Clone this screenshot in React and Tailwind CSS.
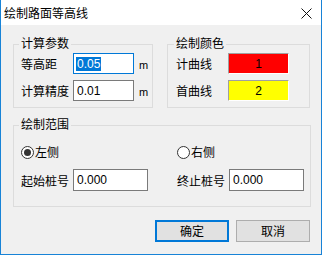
export default function App() {
  const font = "font-['Liberation_Sans','Noto_Sans_CJK_SC',sans-serif]";
  return (
    <div className={`w-[322px] h-[255px] bg-[#f0f0f0] border-x border-b border-[#1883d7] flex flex-col text-[12px] text-black ${font}`}>
      <div className="h-[25px] bg-white flex items-center justify-between pl-[3px] pr-[9px] shrink-0">
        <span className="text-[12px] leading-[16px] pt-[3px]">绘制路面等高线</span>
        <svg width="11" height="11" viewBox="0 0 11 11" className="mt-[1px]">
          <path d="M0.5 0.5L10.5 10.5M10.5 0.5L0.5 10.5" stroke="#111" strokeWidth="1" />
        </svg>
      </div>
      <div className="flex flex-col pl-[12px] pr-[11px] pt-[11px]">
        <div className="flex">
          <fieldset className="w-[141px] border border-[#dcdcdc] pl-[7px] pt-[1px] pb-[6px]">
            <legend className="px-[2px] -ml-[2px] leading-[16px]">计算参数</legend>
            <div className="flex flex-col gap-[6px]">
              <div className="flex items-center h-[21px]">
                <span className="w-[52px] pt-[3px]">等高距</span>
                <div className="w-[61px] h-[21px] bg-white border border-[#0078d7] flex items-center pl-[2px]">
                  <span className="bg-[#0078d7] text-white leading-[14px] px-[1px]">0.05</span>
                </div>
                <span className="ml-[5px] text-[11px] pt-[3px]">m</span>
              </div>
              <div className="flex items-center h-[21px]">
                <span className="w-[52px] pt-[3px]">计算精度</span>
                <div className="w-[61px] h-[21px] bg-white border border-[#7a7a7a] flex items-center pl-[3px]">
                  <span className="leading-[14px]">0.01</span>
                </div>
                <span className="ml-[5px] text-[11px] pt-[3px]">m</span>
              </div>
            </div>
          </fieldset>
          <fieldset className="w-[144px] ml-[14px] border border-[#dcdcdc] pl-[8px] pt-[1px] pb-[6px]">
            <legend className="px-[2px] -ml-[2px] leading-[16px]">绘制颜色</legend>
            <div className="flex flex-col gap-[6px]">
              <div className="flex items-center h-[21px]">
                <span className="w-[52px] pt-[3px]">计曲线</span>
                <div className="w-[61px] h-[21px] bg-[#ff0000] border-t border-l border-[#a0a0a0] border-r border-b border-r-white border-b-white flex items-center justify-center">
                  <span className="leading-[14px]">1</span>
                </div>
              </div>
              <div className="flex items-center h-[21px]">
                <span className="w-[52px] pt-[3px]">首曲线</span>
                <div className="w-[61px] h-[21px] bg-[#ffff00] border-t border-l border-[#a0a0a0] border-r border-b border-r-white border-b-white flex items-center justify-center">
                  <span className="leading-[14px]">2</span>
                </div>
              </div>
            </div>
          </fieldset>
        </div>
        <fieldset className="w-[298px] mt-[9px] border border-[#dcdcdc] pl-[7px] pt-[12px] pb-[15px]">
          <legend className="px-[2px] -ml-[2px] leading-[16px]">绘制范围</legend>
          <div className="grid grid-cols-[156px_1fr] gap-y-[10px]">
            <div className="flex items-center h-[14px]">
              <span className="w-[13px] h-[13px] rounded-full border border-[#333] bg-white flex items-center justify-center">
                <span className="w-[7px] h-[7px] rounded-full bg-[#333]"></span>
              </span>
              <span className="ml-[1px] pt-[2px]">左侧</span>
            </div>
            <div className="flex items-center h-[14px]">
              <span className="w-[13px] h-[13px] rounded-full border border-[#333] bg-white"></span>
              <span className="ml-[1px] pt-[2px]">右侧</span>
            </div>
            <div className="flex items-center h-[22px]">
              <span className="w-[52px] pt-[3px]">起始桩号</span>
              <div className="w-[75px] h-[22px] bg-white border border-[#7a7a7a] flex items-center pl-[3px]">
                <span className="leading-[14px]">0.000</span>
              </div>
            </div>
            <div className="flex items-center h-[22px]">
              <span className="w-[52px] pt-[3px]">终止桩号</span>
              <div className="w-[75px] h-[22px] bg-white border border-[#7a7a7a] flex items-center pl-[3px]">
                <span className="leading-[14px]">0.000</span>
              </div>
            </div>
          </div>
        </fieldset>
        <div className="flex justify-end gap-[7px] mt-[13px] pr-[0px]">
          <button className="w-[74px] h-[22px] bg-[#e1e1e1] border-2 border-[#0078d7] flex items-center justify-center leading-[16px] pt-[1px]">确定</button>
          <button className="w-[74px] h-[22px] bg-[#e1e1e1] border border-[#adadad] flex items-center justify-center leading-[16px] pt-[1px]">取消</button>
        </div>
      </div>
    </div>
  );
}
